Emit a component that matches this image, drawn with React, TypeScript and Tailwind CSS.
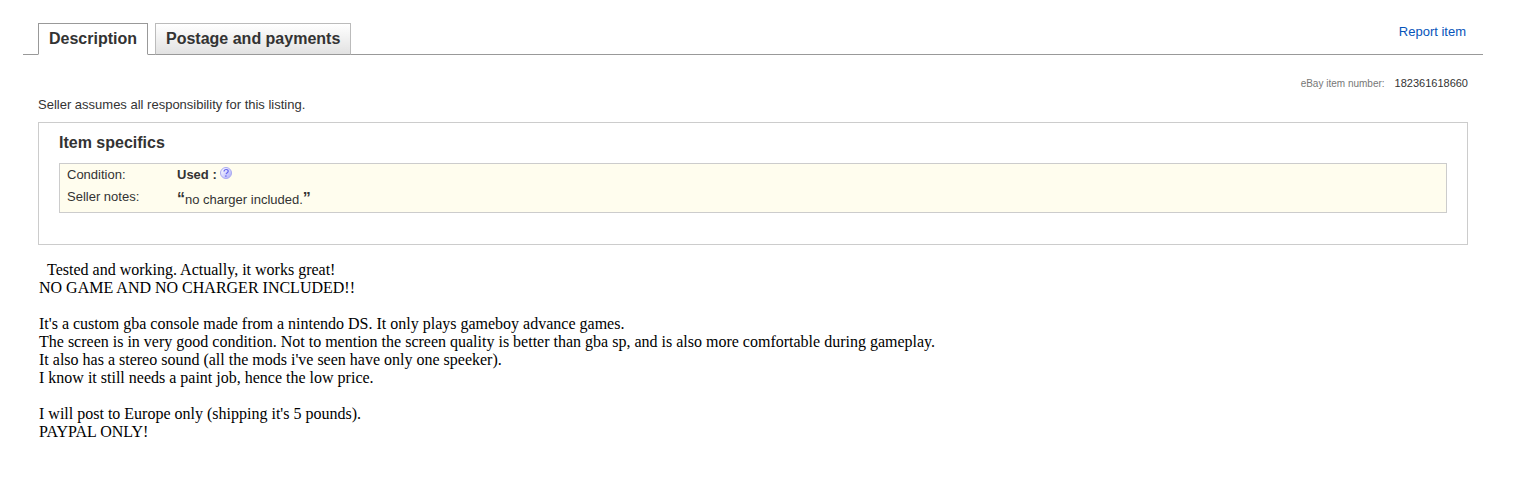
import { useState } from 'react';
import clsx from 'clsx';

const tabs = ['Description', 'Postage and payments'];

const listingText = `  Tested and working. Actually, it works great!
NO GAME AND NO CHARGER INCLUDED!!

It's a custom gba console made from a nintendo DS. It only plays gameboy advance games.
The screen is in very good condition. Not to mention the screen quality is better than gba sp, and is also more comfortable during gameplay.
It also has a stereo sound (all the mods i've seen have only one speeker).
I know it still needs a paint job, hence the low price.

I will post to Europe only (shipping it's 5 pounds).
PAYPAL ONLY!`;

function HelpIcon() {
  return (
    <svg viewBox="0 0 12 12" className="w-3 h-3" aria-hidden="true">
      <defs>
        <linearGradient id="help-fill" x1="0" y1="0" x2="1" y2="1">
          <stop offset="0.2" stopColor="#f4f4ff" />
          <stop offset="1" stopColor="#a6a6fa" />
        </linearGradient>
      </defs>
      <circle cx="6" cy="6" r="5.5" fill="url(#help-fill)" stroke="#a9a9f0" />
      <path d="M4 4.5C4.1 3 5 2.5 6.2 2.5c1.2 0 2 .7 2 1.7 0 1.4-1.9 1.5-2.1 3" fill="none" stroke="#6464ee" strokeWidth="1.2" />
      <circle cx="5.9" cy="9.1" r="0.8" fill="#6464ee" />
    </svg>
  );
}

function Tabs() {
  const [active, setActive] = useState(tabs[0]);

  return (
    <div className="flex items-end border-b border-[#999] pl-[15px] pr-[17px]">
      <div role="tablist" className="flex gap-[7px] -mb-px">
        {tabs.map((tab) => (
          <button
            key={tab}
            role="tab"
            aria-selected={tab === active}
            onClick={() => setActive(tab)}
            className={clsx(
              'h-8 border px-[10px] text-base font-bold whitespace-nowrap',
              tab === active
                ? 'border-[#999] border-b-white bg-white'
                : 'border-[#bbb] border-b-[#999] bg-linear-to-b from-white to-[#e2e2e2]',
            )}
          >
            {tab}
          </button>
        ))}
      </div>
      <a href="#report" className="ml-auto mb-[14px] text-[13px] leading-4 text-[#0654ba] hover:underline">
        Report item
      </a>
    </div>
  );
}

function ItemSpecifics() {
  return (
    <section className="mt-[9px] border border-[#ccc] px-5 pt-[10px] pb-[31px]">
      <h2 className="text-base leading-5 font-bold">Item specifics</h2>
      <div className="mt-[10px] border border-[#ccc] bg-[#fffdee] px-[7px] text-[13px] leading-4">
        <table>
          <tbody>
            <tr className="h-[22px] align-top">
              <th scope="row" className="w-[110px] pt-[3px] text-left font-normal">Condition:</th>
              <td className="pt-[3px]">
                <div className="flex gap-[3px]">
                  <b>Used :</b>
                  <button aria-label="About this condition" className="h-3">
                    <HelpIcon />
                  </button>
                </div>
              </td>
            </tr>
            <tr className="h-[26px] align-top">
              <th scope="row" className="pt-[3px] text-left font-normal">Seller notes:</th>
              <td className="pt-[5px]">
                <span className="text-base leading-4 font-bold">“</span>
                no charger included.
                <span className="text-base leading-4 font-bold">”</span>
              </td>
            </tr>
          </tbody>
        </table>
      </div>
    </section>
  );
}

export default function App() {
  return (
    <main className="pt-[23px] pb-6 pl-[23px] pr-[52px] bg-white text-[#333] font-['Liberation_Sans',Arial,sans-serif]">
      <Tabs />
      <div className="px-[15px]">
        <dl className="mt-[22px] flex items-baseline justify-end gap-[10px] text-[10px] leading-3">
          <dt className="text-[#777]">eBay item number:</dt>
          <dd className="text-[11px] leading-3">182361618660</dd>
        </dl>
        <p className="mt-[7px] text-[13px] leading-4">Seller assumes all responsibility for this listing.</p>
        <ItemSpecifics />
        <p className="mt-4 pl-px whitespace-pre-wrap text-black text-base leading-[18px] font-['Liberation_Serif','Times_New_Roman',serif]">
          {listingText}
        </p>
      </div>
    </main>
  );
}
